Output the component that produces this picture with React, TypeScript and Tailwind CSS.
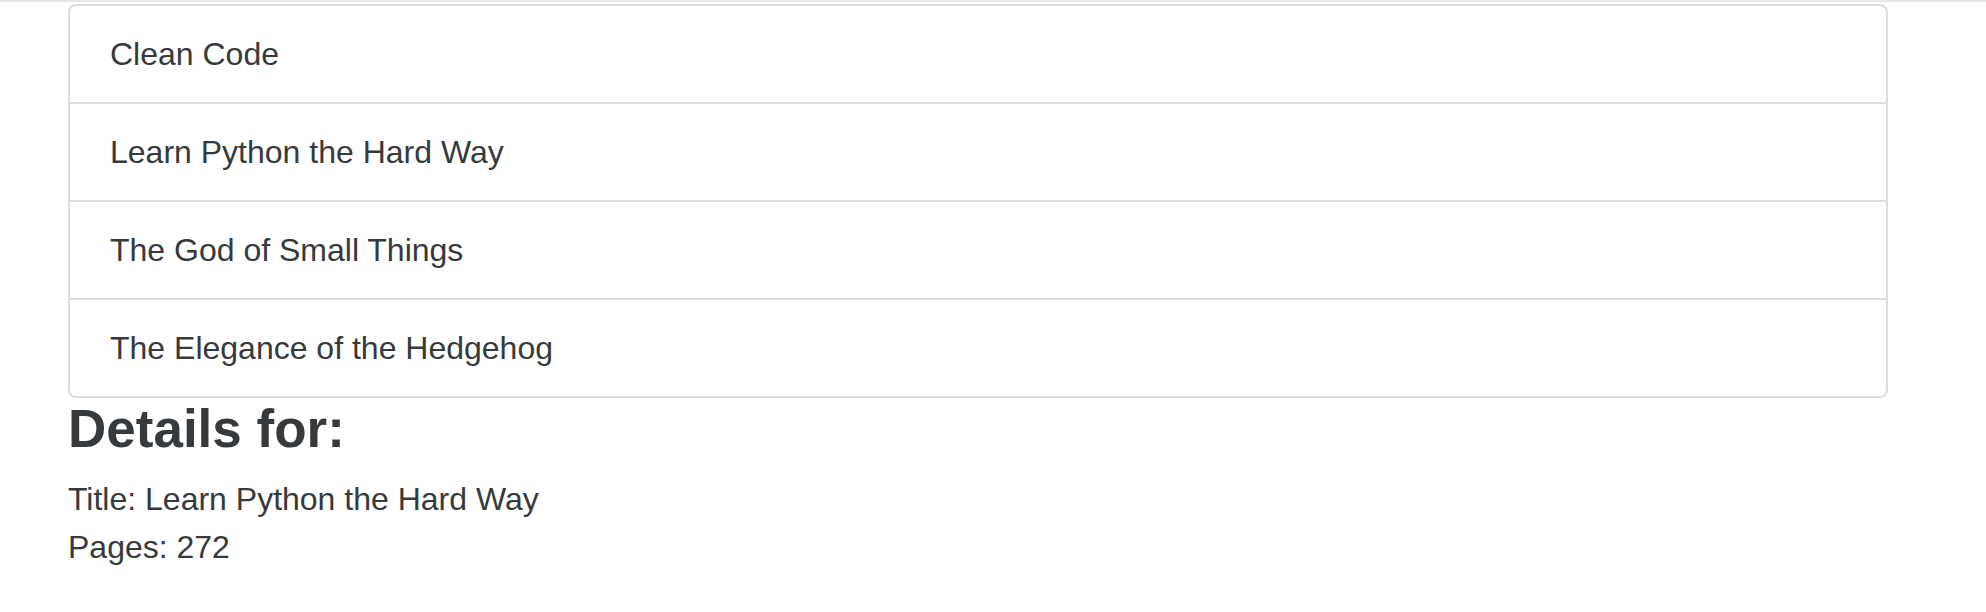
import React from "react";

const books = [
  "Clean Code",
  "Learn Python the Hard Way",
  "The God of Small Things",
  "The Elegance of the Hedgehog",
];

export default function App() {
  return (
    <div
      className="min-h-[612px] bg-white text-[#373a3c]"
      style={{ fontFamily: '"Liberation Sans", Arial, Helvetica, sans-serif' }}
    >
      <div className="h-[2px] w-full bg-[#e6e6e6]" />
      <div className="pl-[68px] pt-[2px]">
        <ul className="w-[1820px] rounded-[8px] border-2 border-[#dddddd] bg-white">
          {books.map((b, i) => (
            <li
              key={b}
              className={`px-[40px] py-[24px] text-[32px] leading-[48px] ${
                i > 0 ? "border-t-2 border-[#dddddd]" : ""
              }`}
            >
              {b}
            </li>
          ))}
        </ul>
        <h2 className="mb-[16px] text-[53px] font-bold leading-[61px]">Details for:</h2>
        <div className="text-[32px] leading-[48px]">Title: Learn Python the Hard Way</div>
        <div className="text-[32px] leading-[48px]">Pages: 272</div>
      </div>
    </div>
  );
}
